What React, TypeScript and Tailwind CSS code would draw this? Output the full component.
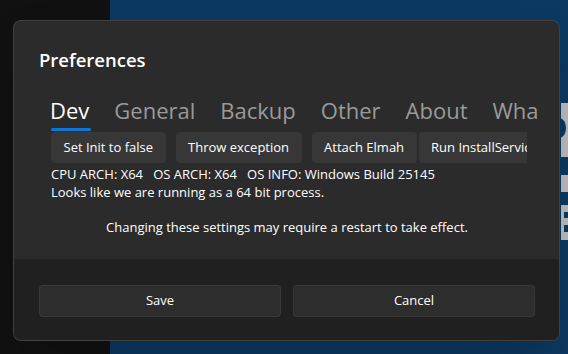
const font = { fontFamily: '"Open Sans", "Noto Sans", sans-serif' }

const tabs = ['Dev', 'General', 'Backup', 'Other', 'About', 'What\u2019s New']
const devButtons = ['Set Init to false', 'Throw exception', 'Attach Elmah', 'Run InstallService']

function Backdrop() {
  return (
    <>
      <div className="absolute inset-y-0 left-0 w-[110px] bg-[#111111]" />
      <div className="absolute inset-y-0 left-[110px] right-0 bg-[#0c3961]" />
      {/* bit of a window peeking out from behind the dialog */}
      <svg className="absolute left-[561px] top-[103px]" width="7" height="140" viewBox="0 0 7 140">
        <rect x="0" y="0" width="7" height="137" fill="#bdbdbd" />
        <ellipse cx="-1" cy="25" rx="6" ry="9.5" fill="#0c3961" />
        <rect x="0" y="54" width="7" height="18" fill="#0c3961" />
        <rect x="0" y="89" width="7" height="13" fill="#0c3961" />
        <rect x="3" y="109" width="4" height="6" fill="#0c3961" />
        <rect x="3" y="122" width="4" height="7" fill="#0c3961" />
      </svg>
    </>
  )
}

export default function App() {
  return (
    <div className="relative w-[568px] h-[354px] overflow-hidden" style={font}>
      <Backdrop />

      <div className="absolute left-[13px] top-[20px] w-[547px] h-[321px] rounded-lg border border-white/10 bg-[#2b2b2b] flex flex-col overflow-hidden shadow-2xl">
        <div className="flex-1 pl-[25px] pr-[24px] pt-[25px]">
          <h2 className="text-[18.5px] leading-7 font-semibold text-white">Preferences</h2>

          <div className="mt-[20px] ml-[11px] w-[487px] overflow-hidden">
            <div className="flex gap-[25px] whitespace-nowrap">
              {tabs.map((t, i) => (
                <div key={t} className="relative pb-[6px]">
                  <span className={`text-[22px] leading-8 ${i === 0 ? 'text-white' : 'text-[#9a9a9a]'}`}>{t}</span>
                  {i === 0 && <div className="absolute left-[1px] right-[-2px] top-[34px] h-[3px] rounded-full bg-[#0a78d4]" />}
                </div>
              ))}
            </div>
          </div>

          <div className="ml-[12px] w-[476px] overflow-hidden">
            <div className="flex gap-[10px] whitespace-nowrap">
              {devButtons.map((b, i) => (
                <button
                  key={b}
                  className={`h-[31px] px-[12.5px] rounded-[4px] bg-[#373737] text-[13px] text-white shrink-0 ${i === 3 ? '-ml-[8px]' : ''}`}
                >
                  {b}
                </button>
              ))}
            </div>
          </div>

          <div className="ml-[12px] mt-[2px] text-[13px] leading-[18px] text-white">
            <p className="whitespace-pre">CPU ARCH: X64   OS ARCH: X64   OS INFO: Windows Build 25145</p>
            <p>Looks like we are running as a 64 bit process.</p>
          </div>

          <p className="mt-[16.5px] text-center text-[13px] leading-[18px] text-white">
            Changing these settings may require a restart to take effect.
          </p>
        </div>

        <div className="h-[81px] bg-[#202020] pl-[25px] pr-[24px] pt-[26px] grid grid-cols-2 gap-[12px] content-start">
          <button className="h-[32px] rounded-[4px] bg-[#2d2d2d] border border-white/5 text-[13px] text-white">Save</button>
          <button className="h-[32px] rounded-[4px] bg-[#2d2d2d] border border-white/5 text-[13px] text-white">Cancel</button>
        </div>
      </div>
    </div>
  )
}
